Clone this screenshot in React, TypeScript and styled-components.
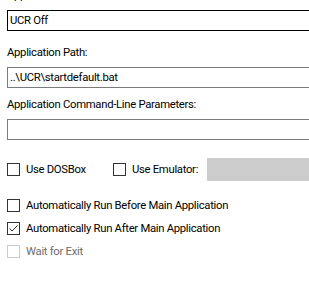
import styled, { createGlobalStyle } from 'styled-components';

const GlobalStyle = createGlobalStyle`
  html, body {
    margin: 0;
    padding: 0;
    background: #ffffff;
    overflow: hidden;
  }
  body {
    font-family: Roboto, "Liberation Sans", sans-serif;
    font-size: 11.3px;
    letter-spacing: -0.3px;
    color: #000000;
  }
`;

const Panel = styled.div`
  width: 309px;
  height: 286px;
  overflow: hidden;
  padding-left: 7px;
  box-sizing: border-box;
`;

const Field = styled.div<{ $top: number }>`
  display: flex;
  flex-direction: column;
  margin-top: ${(p) => p.$top}px;
`;

const Label = styled.div`
  height: 16px;
  line-height: 16px;
  white-space: nowrap;
`;

const TextBox = styled.div<{ $focused?: boolean }>`
  width: 340px;
  height: 21px;
  box-sizing: border-box;
  margin-top: 6px;
  border: 1px solid ${(p) => (p.$focused ? '#000000' : '#7a7a7a')};
  padding: 0 2px;
  line-height: 19px;
  white-space: nowrap;
  background: #ffffff;
`;

const Row = styled.div<{ $top: number }>`
  display: flex;
  align-items: center;
  margin-top: ${(p) => p.$top}px;
  height: 23px;
`;

const Check = styled.label<{ $disabled?: boolean; $width?: number }>`
  display: flex;
  align-items: center;
  gap: 6px;
  width: ${(p) => (p.$width ? `${p.$width}px` : 'auto')};
  flex-shrink: 0;
  color: ${(p) => (p.$disabled ? '#6d6d6d' : '#000000')};
  white-space: nowrap;
  height: 23px;
`;

const Box = styled.span<{ $disabled?: boolean }>`
  width: 13px;
  height: 13px;
  box-sizing: border-box;
  border: 1px solid ${(p) => (p.$disabled ? '#cccccc' : '#333333')};
  background: #ffffff;
  display: flex;
  align-items: center;
  justify-content: center;
`;

const EmulatorPicker = styled.div`
  flex: 1;
  height: 23px;
  background: #cccccc;
`;

const CheckList = styled.div`
  display: flex;
  flex-direction: column;
  margin-top: 13px;
`;

function CheckBox({ label, checked, disabled, width }: { label: string; checked?: boolean; disabled?: boolean; width?: number }) {
  return (
    <Check $disabled={disabled} $width={width}>
      <Box $disabled={disabled}>
        {checked && (
          <svg width="11" height="11" viewBox="0 0 11 11">
            <path d="M1.5 5.5 L4 8 L9.5 2.5" fill="none" stroke="#333333" strokeWidth="1" />
          </svg>
        )}
      </Box>
      {label}
    </Check>
  );
}

export default function App() {
  return (
    <>
      <GlobalStyle />
      <Panel>
        <Field $top={-12}>
          <Label>Application Name:</Label>
          <TextBox $focused>UCR Off</TextBox>
        </Field>
        <Field $top={14}>
          <Label>Application Path:</Label>
          <TextBox>..\UCR\startdefault.bat</TextBox>
        </Field>
        <Field $top={9}>
          <Label>Application Command-Line Parameters:</Label>
          <TextBox />
        </Field>
        <Row $top={18}>
          <CheckBox label="Use DOSBox" width={106} />
          <CheckBox label="Use Emulator:" width={94} />
          <EmulatorPicker />
        </Row>
        <CheckList>
          <CheckBox label="Automatically Run Before Main Application" />
          <CheckBox label="Automatically Run After Main Application" checked />
          <CheckBox label="Wait for Exit" disabled />
        </CheckList>
      </Panel>
    </>
  );
}
